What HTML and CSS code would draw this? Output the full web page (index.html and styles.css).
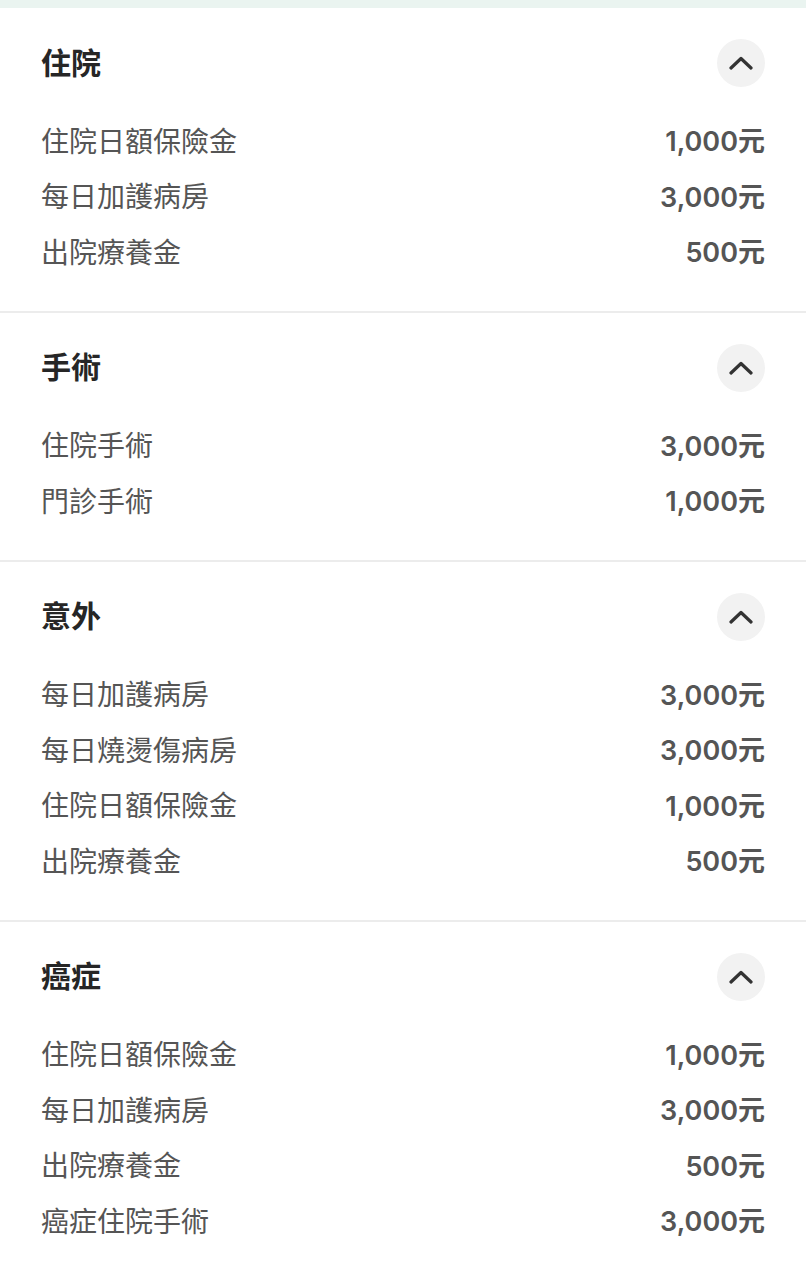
FILE: index.html
```html
<!DOCTYPE html>
<html lang="zh-Hant">
<head>
    <meta charset="UTF-8">
    <meta name="viewport" content="width=device-width, initial-scale=1.0">
    <title>保障內容</title>
    <link rel="stylesheet" href="styles.css">
</head>
<body>
    <div class="top-strip"></div>

    <div class="section">
        <div class="section-head">
            <h2>住院</h2>
            <button class="toggle" aria-label="收合">
                <svg width="24" height="14" viewBox="0 0 24 14"><path d="M2 12 L12 2.5 L22 12" fill="none" stroke="#333" stroke-width="3.2" stroke-linecap="round" stroke-linejoin="round"/></svg>
            </button>
        </div>
        <div class="rows">
            <div class="row"><span class="label">住院日額保險金</span><span class="value">1,000元</span></div>
            <div class="row"><span class="label">每日加護病房</span><span class="value">3,000元</span></div>
            <div class="row"><span class="label">出院療養金</span><span class="value">500元</span></div>
        </div>
    </div>

    <div class="section">
        <div class="section-head">
            <h2>手術</h2>
            <button class="toggle" aria-label="收合">
                <svg width="24" height="14" viewBox="0 0 24 14"><path d="M2 12 L12 2.5 L22 12" fill="none" stroke="#333" stroke-width="3.2" stroke-linecap="round" stroke-linejoin="round"/></svg>
            </button>
        </div>
        <div class="rows">
            <div class="row"><span class="label">住院手術</span><span class="value">3,000元</span></div>
            <div class="row"><span class="label">門診手術</span><span class="value">1,000元</span></div>
        </div>
    </div>

    <div class="section">
        <div class="section-head">
            <h2>意外</h2>
            <button class="toggle" aria-label="收合">
                <svg width="24" height="14" viewBox="0 0 24 14"><path d="M2 12 L12 2.5 L22 12" fill="none" stroke="#333" stroke-width="3.2" stroke-linecap="round" stroke-linejoin="round"/></svg>
            </button>
        </div>
        <div class="rows">
            <div class="row"><span class="label">每日加護病房</span><span class="value">3,000元</span></div>
            <div class="row"><span class="label">每日燒燙傷病房</span><span class="value">3,000元</span></div>
            <div class="row"><span class="label">住院日額保險金</span><span class="value">1,000元</span></div>
            <div class="row"><span class="label">出院療養金</span><span class="value">500元</span></div>
        </div>
    </div>

    <div class="section">
        <div class="section-head">
            <h2>癌症</h2>
            <button class="toggle" aria-label="收合">
                <svg width="24" height="14" viewBox="0 0 24 14"><path d="M2 12 L12 2.5 L22 12" fill="none" stroke="#333" stroke-width="3.2" stroke-linecap="round" stroke-linejoin="round"/></svg>
            </button>
        </div>
        <div class="rows">
            <div class="row"><span class="label">住院日額保險金</span><span class="value">1,000元</span></div>
            <div class="row"><span class="label">每日加護病房</span><span class="value">3,000元</span></div>
            <div class="row"><span class="label">出院療養金</span><span class="value">500元</span></div>
            <div class="row"><span class="label">癌症住院手術</span><span class="value">3,000元</span></div>
        </div>
    </div>
</body>
</html>
```

FILE: styles.css
```css
body {
    font-family: "Noto Sans CJK TC", "Noto Sans", sans-serif;
    background-color: #fff;
    margin: 0;
    padding: 0;
    color: #555;
}
.top-strip {
    height: 8px;
    background-color: #eaf4f0;
}
.section {
    padding: 31px 41px 32px;
    border-bottom: 2px solid #ececec;
}
.section:last-child {
    border-bottom: none;
}
.section-head {
    display: flex;
    align-items: center;
    justify-content: space-between;
    height: 48px;
    margin-bottom: 25px;
}
.section-head h2 {
    margin: 0 0 5px;
    font-size: 30px;
    font-weight: 700;
    color: #262626;
}
.toggle {
    width: 48px;
    height: 48px;
    border: none;
    border-radius: 50%;
    background-color: #f2f2f2;
    padding: 0;
    display: flex;
    align-items: center;
    justify-content: center;
    cursor: pointer;
}
.row {
    display: flex;
    align-items: center;
    justify-content: space-between;
    height: 55.5px;
}
.label {
    font-size: 28px;
    color: #555;
}
.value {
    font-family: Inter, "Noto Sans CJK TC", sans-serif;
    font-size: 27px;
    font-weight: 600;
    color: #555;
}
```
